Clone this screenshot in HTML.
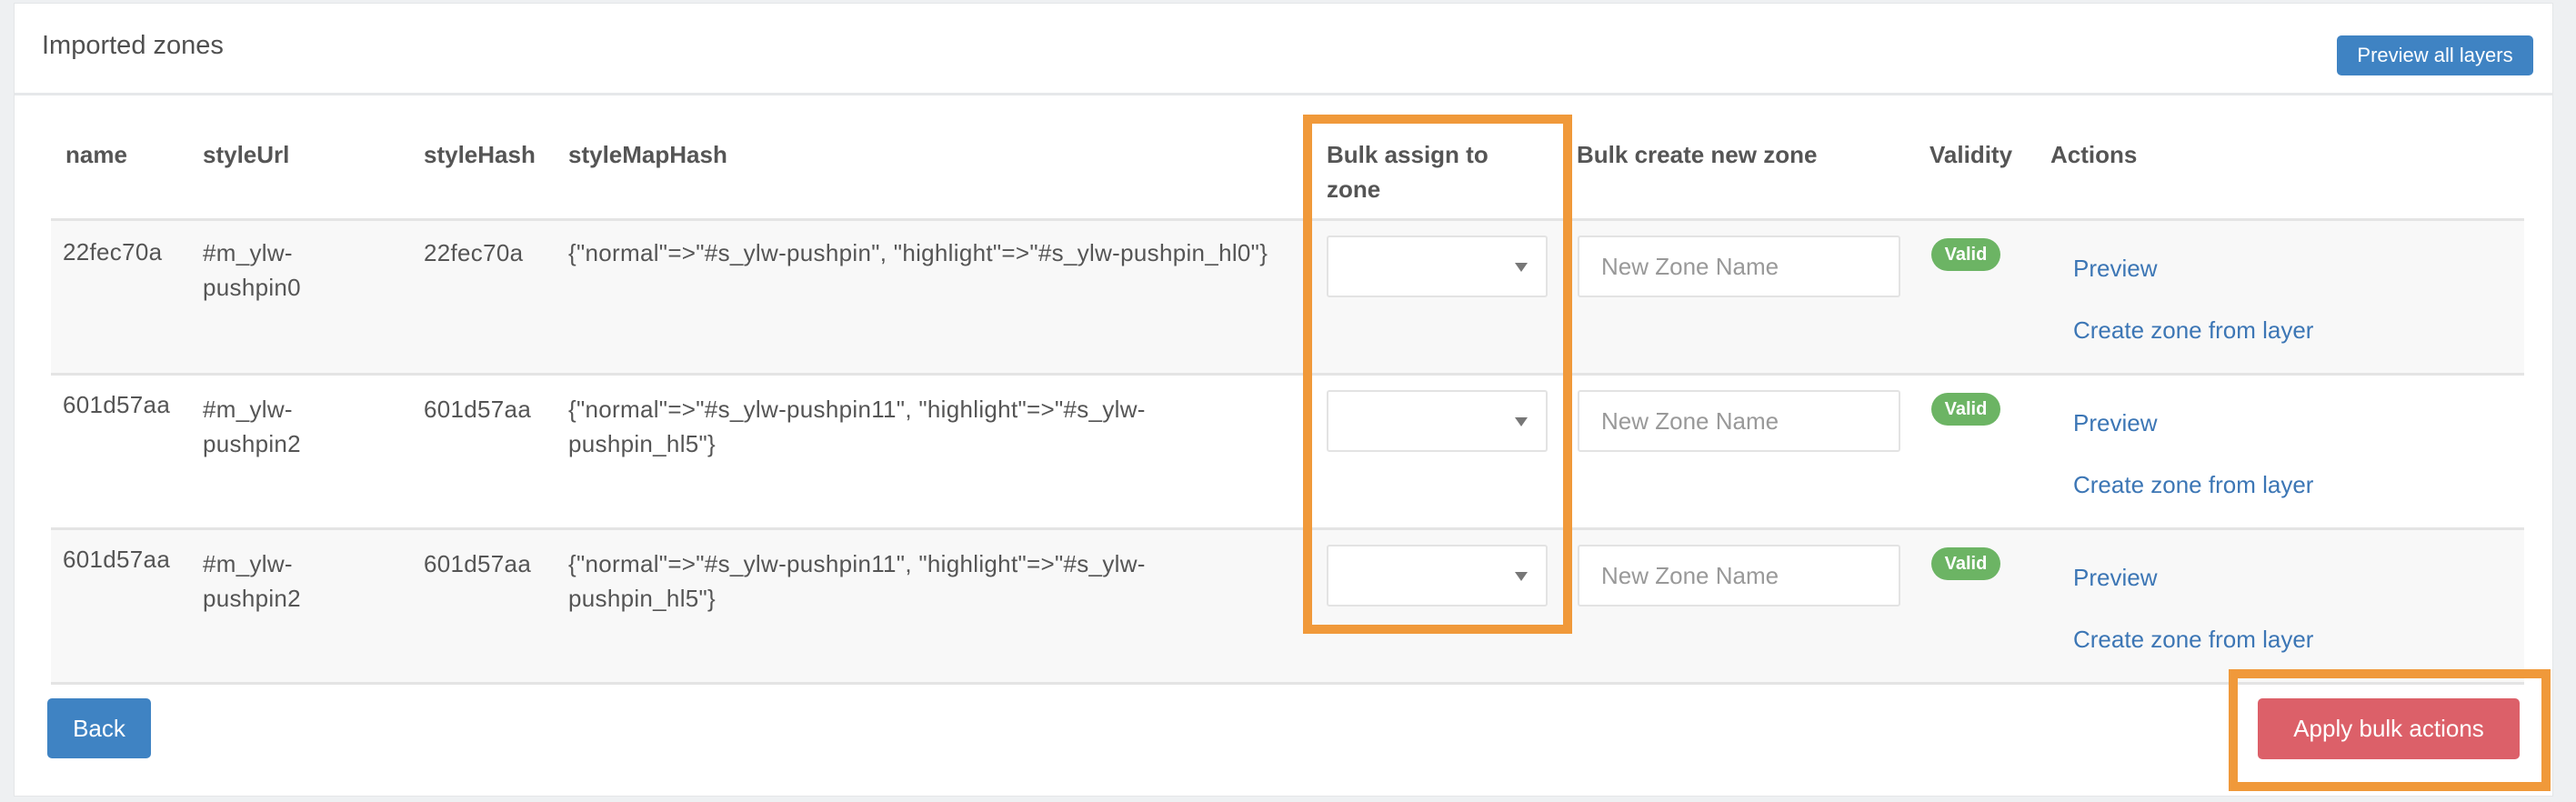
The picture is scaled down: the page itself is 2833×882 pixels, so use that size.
<!DOCTYPE html>
<html><head><meta charset="utf-8"><style>
*{margin:0;padding:0;box-sizing:border-box}
body{width:2833px;height:882px;background:#eef0f2;font-family:"Liberation Sans",sans-serif;color:#555;position:relative;overflow:hidden}
.a{position:absolute;white-space:nowrap}
.card{position:absolute;left:15px;top:3px;width:2793px;height:873px;background:#fff;border:1px solid #e4e6e8}
.hl{position:absolute;height:3px;background:#e6e8ea}
.row{position:absolute;left:56px;width:2720px;height:170px;border-top:3px solid #e4e4e4}
.t{font-size:26px;line-height:38px;color:#555;letter-spacing:0.3px}
.th{font-size:26px;line-height:38px;font-weight:bold;color:#555}
.sel{position:absolute;left:1459px;width:243px;height:68px;background:#fff;border:2px solid #e3e3e3;border-radius:3px}
.sel:after{content:"";position:absolute;right:20px;top:28px;border-left:7px solid transparent;border-right:7px solid transparent;border-top:10px solid #777}
.inp{position:absolute;left:1735px;width:355px;height:68px;background:#fff;border:2px solid #e3e3e3;border-radius:3px;font-size:26px;color:#999;padding-left:24px;line-height:64px}
.badge{position:absolute;left:2124px;width:76px;height:36px;background:#6cb464;border-radius:18px;color:#fff;font-size:20px;font-weight:bold;text-align:center;line-height:36px}
.lk{color:#3c76b5;font-size:26px}
.btn{position:absolute;border-radius:5px;color:#fff;text-align:center}
.ob{position:absolute;border:10px solid #f0993a}
</style></head><body>
<div class="card"></div>
<div class="a" style="left:46px;top:30px;font-size:29px;line-height:40px;color:#505050">Imported zones</div>
<div class="btn" style="left:2570px;top:39px;width:216px;height:44px;background:#3f83c3;font-size:22px;line-height:44px">Preview all layers</div>
<div class="hl" style="left:16px;top:102px;width:2792px"></div>

<div class="a th" style="left:72px;top:151px">name</div>
<div class="a th" style="left:223px;top:151px">styleUrl</div>
<div class="a th" style="left:466px;top:151px">styleHash</div>
<div class="a th" style="left:625px;top:151px">styleMapHash</div>
<div class="a th" style="left:1459px;top:151px">Bulk assign to<br>zone</div>
<div class="a th" style="left:1734px;top:151px">Bulk create new zone</div>
<div class="a th" style="left:2122px;top:151px">Validity</div>
<div class="a th" style="left:2255px;top:151px">Actions</div>

<div class="row" style="top:240px;background:#f8f8f8"></div>
<div class="row" style="top:410px;background:#fff"></div>
<div class="row" style="top:580px;background:#f8f8f8"></div>
<div class="hl" style="left:56px;top:750px;width:2720px;background:#e4e4e4"></div>

<div class="a t" style="left:69px;top:258px">22fec70a</div>
<div class="a t" style="left:223px;top:259px">#m_ylw-<br>pushpin0</div>
<div class="a t" style="left:466px;top:259px">22fec70a</div>
<div class="a t" style="left:625px;top:259px">{"normal"=&gt;"#s_ylw-pushpin", "highlight"=&gt;"#s_ylw-pushpin_hl0"}</div>
<div class="sel" style="top:259px"></div>
<div class="inp" style="top:259px">New Zone Name</div>
<div class="badge" style="top:262px">Valid</div>
<div class="a lk" style="left:2280px;top:280px">Preview</div>
<div class="a lk" style="left:2280px;top:348px">Create zone from layer</div>

<div class="a t" style="left:69px;top:426px">601d57aa</div>
<div class="a t" style="left:223px;top:431px">#m_ylw-<br>pushpin2</div>
<div class="a t" style="left:466px;top:431px">601d57aa</div>
<div class="a t" style="left:625px;top:431px">{"normal"=&gt;"#s_ylw-pushpin11", "highlight"=&gt;"#s_ylw-<br>pushpin_hl5"}</div>
<div class="sel" style="top:429px"></div>
<div class="inp" style="top:429px">New Zone Name</div>
<div class="badge" style="top:432px">Valid</div>
<div class="a lk" style="left:2280px;top:450px">Preview</div>
<div class="a lk" style="left:2280px;top:518px">Create zone from layer</div>

<div class="a t" style="left:69px;top:596px">601d57aa</div>
<div class="a t" style="left:223px;top:601px">#m_ylw-<br>pushpin2</div>
<div class="a t" style="left:466px;top:601px">601d57aa</div>
<div class="a t" style="left:625px;top:601px">{"normal"=&gt;"#s_ylw-pushpin11", "highlight"=&gt;"#s_ylw-<br>pushpin_hl5"}</div>
<div class="sel" style="top:599px"></div>
<div class="inp" style="top:599px">New Zone Name</div>
<div class="badge" style="top:602px">Valid</div>
<div class="a lk" style="left:2280px;top:620px">Preview</div>
<div class="a lk" style="left:2280px;top:688px">Create zone from layer</div>

<div class="btn" style="left:52px;top:768px;width:114px;height:66px;background:#3f83c3;font-size:26px;line-height:66px">Back</div>
<div class="btn" style="left:2483px;top:768px;width:288px;height:67px;background:#dc6069;font-size:26px;line-height:67px">Apply bulk actions</div>

<div class="ob" style="left:1433px;top:126px;width:296px;height:571px"></div>
<div class="ob" style="left:2451px;top:736px;width:354px;height:134px"></div>
</body></html>
